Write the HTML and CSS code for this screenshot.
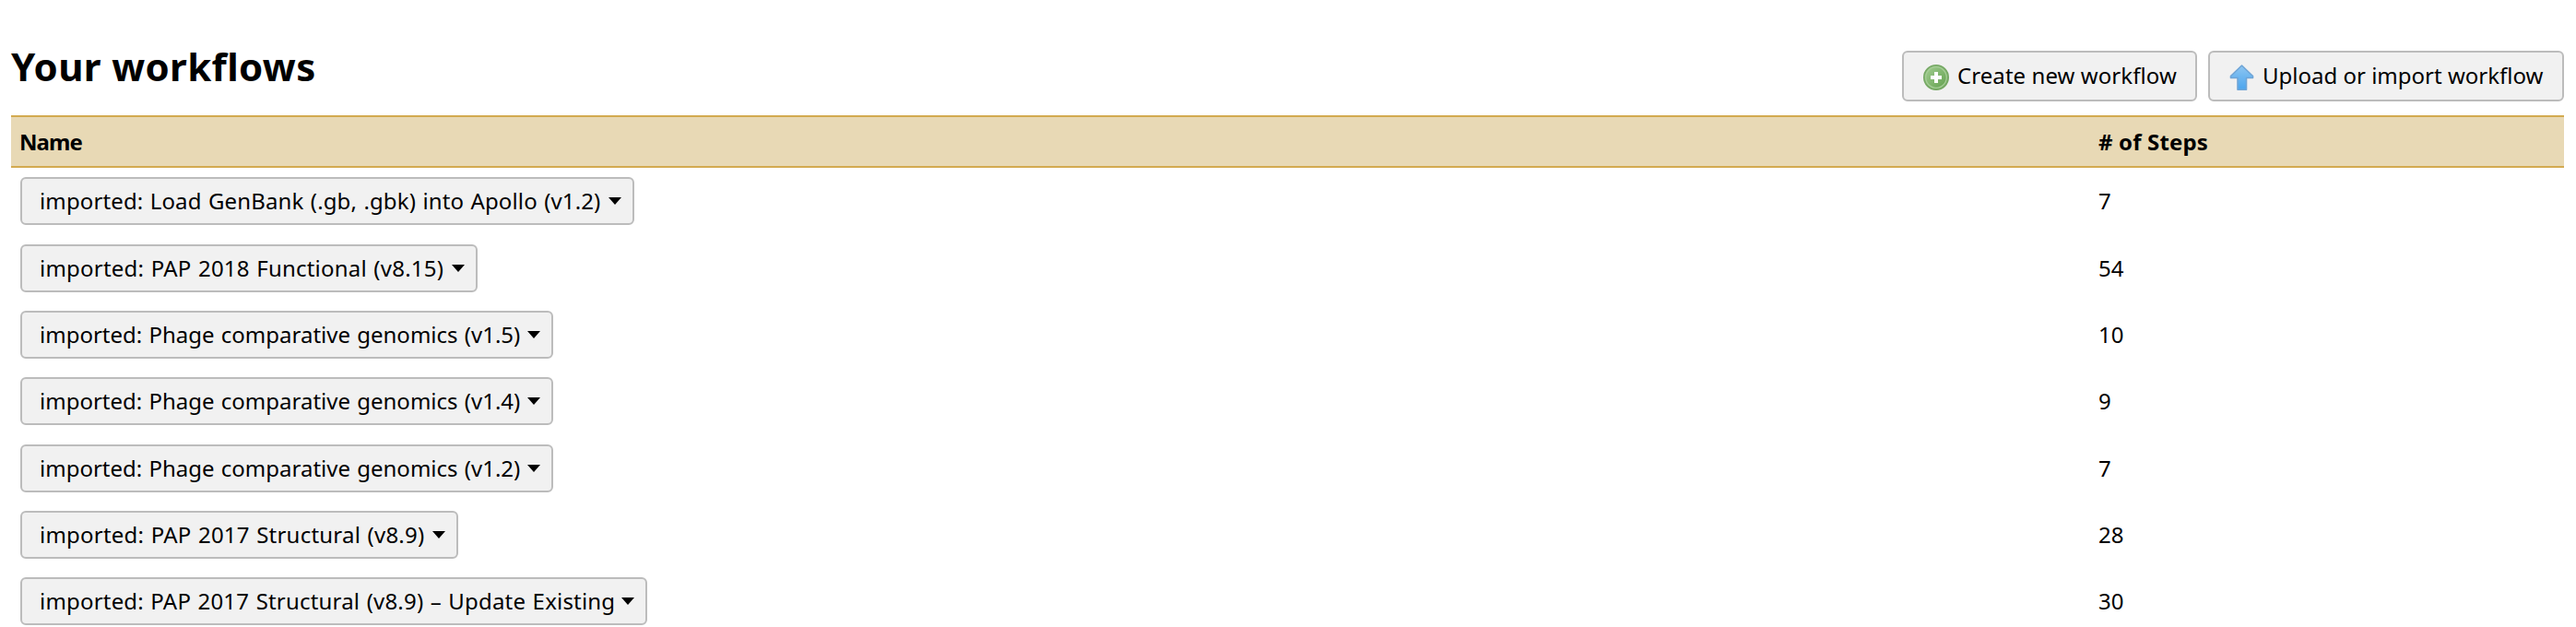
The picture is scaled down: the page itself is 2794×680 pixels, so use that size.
FILE: index.html
```html
<!DOCTYPE html>
<html lang="en">
<head>
<meta charset="utf-8">
<title>Your workflows</title>
<link rel="stylesheet" href="styles.css">
</head>
<body>
<header class="page-head">
  <h1 class="title">Your workflows</h1>
  <nav class="actions">
    <a class="button action create">
      <svg class="icon" viewBox="0 0 32 32"><defs><linearGradient id="g" x1="0" y1="0" x2="1" y2="1"><stop offset="0" stop-color="#a5cf94"/><stop offset="1" stop-color="#5f9e4b"/></linearGradient></defs><circle cx="16" cy="16" r="13.2" fill="url(#g)" stroke="#76a864" stroke-width="1.6"/><circle cx="16" cy="16" r="11.3" fill="none" stroke="#a5cd96" stroke-width="1.3"/><path d="M16 10v12M10 16h12" stroke="#fff" stroke-width="4"/></svg>
      <span class="label">Create new workflow</span>
    </a>
    <a class="button action upload">
      <svg class="icon" viewBox="0 0 32 32"><defs><linearGradient id="b" x1="0" y1="0" x2="0" y2="1"><stop offset="0" stop-color="#8fc6f1"/><stop offset="1" stop-color="#4aa5ee"/></linearGradient></defs><path d="M15.500 3L27.500 14.500V16.500H20.500V29.200H11V16.500H3.500V14.500Z" fill="url(#b)" stroke="#70a5d6" stroke-width="1.6" stroke-linejoin="round"/></svg>
      <span class="label">Upload or import workflow</span>
    </a>
  </nav>
</header>
<table class="grid">
  <thead><tr><th class="name">Name</th><th><span class="steps"># of Steps</span></th></tr></thead>
  <tbody>
    <tr><td><a class="button menu w1"><span class="label">imported: Load GenBank (.gb, .gbk) into Apollo (v1.2)</span><i class="caret"></i></a></td><td>7</td></tr>
    <tr><td><a class="button menu w2"><span class="label">imported: PAP 2018 Functional (v8.15)</span><i class="caret"></i></a></td><td>54</td></tr>
    <tr><td><a class="button menu w3"><span class="label">imported: Phage comparative genomics (v1.5)</span><i class="caret"></i></a></td><td>10</td></tr>
    <tr><td><a class="button menu w3"><span class="label">imported: Phage comparative genomics (v1.4)</span><i class="caret"></i></a></td><td>9</td></tr>
    <tr><td><a class="button menu w3"><span class="label">imported: Phage comparative genomics (v1.2)</span><i class="caret"></i></a></td><td>7</td></tr>
    <tr><td><a class="button menu w4"><span class="label">imported: PAP 2017 Structural (v8.9)</span><i class="caret"></i></a></td><td>28</td></tr>
    <tr><td><a class="button menu w5"><span class="label">imported: PAP 2017 Structural (v8.9) – Update Existing</span><i class="caret"></i></a></td><td>30</td></tr>
  </tbody>
</table>
</body>
</html>
```

FILE: styles.css
```css
* { box-sizing: border-box; }
body { margin: 0; padding: 0 13px 0 12px; background: #fff; color: #000; font: 24px/30px "Noto Sans", "Open Sans", sans-serif; overflow: hidden; }
.page-head { display: flex; justify-content: space-between; height: 125px; }
.title { margin: 44px 0 0; font-size: 42px; line-height: 56px; letter-spacing: 0.35px; white-space: nowrap; }
.actions { display: flex; gap: 12px; padding-top: 55px; }
.button { display: inline-flex; align-items: center; border: 2px solid #bcbcbc; border-radius: 6px; background: #f1f1f1; white-space: nowrap; }
.action { height: 55px; padding-left: 19px; padding-bottom: 2px; }
.create { width: 320px; letter-spacing: 0.07px; }
.upload { width: 386px; }
.icon { width: 32px; height: 32px; margin: 5px 7px 0 0; flex: none; }
.upload .icon { margin-right: 6px; }
.grid { width: 100%; border-collapse: separate; border-spacing: 0; table-layout: fixed; }
th { height: 57px; padding: 0 10px; text-align: left; background: #e8d9b5; border-top: 2px solid #d3aa50; border-bottom: 2px solid #d3aa50; }
.name { width: 2254px; padding-left: 9px; letter-spacing: -0.9px; }
.steps { letter-spacing: 0.15px; }
td { height: 72px; padding: 0 10px; }
tbody tr:nth-child(3n + 2) td { height: 73px; }
.menu { height: 52px; padding: 0 12px 0 19px; justify-content: space-between; vertical-align: middle; word-spacing: 1px; }
.w1 { width: 666px; letter-spacing: 0.13px; }
.w2 { width: 496px; letter-spacing: 0.22px; }
.w3 { width: 578px; }
.w4 { width: 475px; letter-spacing: 0.22px; }
.w5 { width: 680px; letter-spacing: 0.19px; }
.caret { border: 7px solid transparent; border-top: 8px solid #000; border-bottom: 0; }
```
